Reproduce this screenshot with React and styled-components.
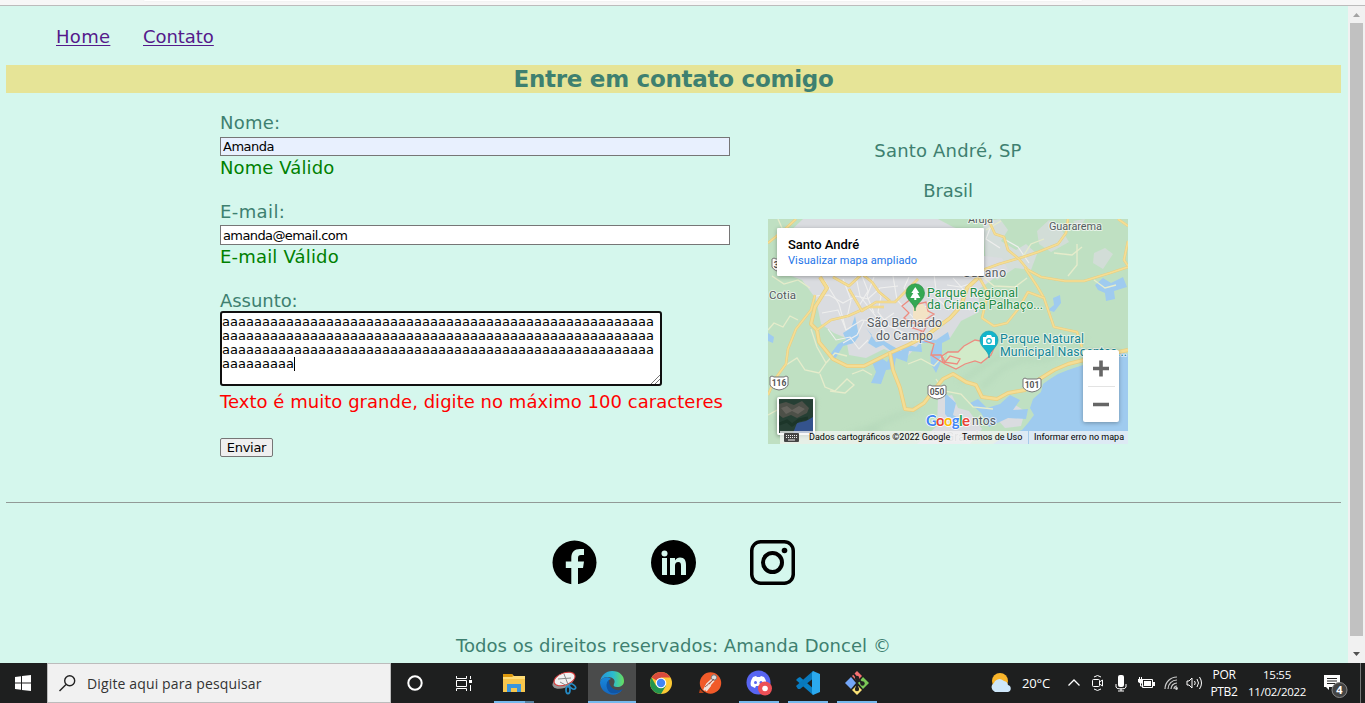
import React from "react";
import styled, { createGlobalStyle } from "styled-components";

const GlobalStyle = createGlobalStyle`
  * { box-sizing: border-box; }
  html, body { margin: 0; padding: 0; overflow: hidden; }
  body { font-family: "DejaVu Sans", Verdana, sans-serif; }
  svg { display: block; flex: none; }
  p, h1 { margin: 0; }
`;

const Screen = styled.div`
  width: 1365px;
  height: 703px;
  display: flex;
  flex-direction: column;
  overflow: hidden;
`;

const BrowserEdge = styled.div`
  height: 6px;
  flex: none;
  background: #f7f7f7;
  border-bottom: 1px solid #bcbcbc;
  padding-left: 144px;
`;

const AddressBar = styled.div`
  width: 938px;
  height: 1px;
  background: #fff;
  border-radius: 0 0 4px 4px;
  box-shadow: 0 0 2px #e8e8e8;
`;

const Viewport = styled.div`
  height: 657px;
  flex: none;
  display: flex;
`;

const Page = styled.main`
  width: 1348px;
  padding: 0 7px 0 6px;
  background: #d5f7ed;
  color: #3e8070;
  font-size: 18px;
  line-height: 22px;
`;

const Nav = styled.nav`
  height: 59px;
  padding: 20px 0 0 50px;
  display: flex;
  gap: 33px;
`;

const NavLink = styled.a`
  width: ${(p) => p.$w}px;
  color: #551a8b;
  text-decoration: underline;
  text-decoration-thickness: 1px;
  text-underline-offset: 2px;
  letter-spacing: ${(p) => p.$ls}px;
  white-space: nowrap;
`;

const Title = styled.h1`
  height: 28px;
  background: #e6e497;
  font-size: 23px;
  line-height: 29px;
  font-weight: 700;
  text-align: center;
  letter-spacing: -0.27px;
`;

const Columns = styled.div`
  display: flex;
  height: 409px;
  padding-left: 214px;
  gap: 38px;
`;

const Form = styled.form`
  width: 510px;
  padding-top: 19px;
  display: flex;
  flex-direction: column;
`;

const Label = styled.label`
  height: ${(p) => p.$h}px;
  letter-spacing: ${(p) => p.$ls || 0}px;
`;

const Input = styled.input`
  height: ${(p) => p.$h}px;
  width: 510px;
  border: 1px solid #767676;
  border-radius: 0;
  padding: 0 2px;
  outline: none;
  background: ${(p) => (p.$filled ? "#e8f0fe" : "#fff")};
  color: #000;
  font: 13px "DejaVu Sans", Verdana, sans-serif;
  letter-spacing: ${(p) => p.$ls || 0}px;
`;

const Message = styled.p`
  height: 22px;
  line-height: ${(p) => p.$lh || 22}px;
  margin-bottom: ${(p) => p.$mb}px;
  color: ${(p) => (p.$error ? "#ff0000" : "#008000")};
  letter-spacing: ${(p) => p.$ls || 0}px;
  white-space: nowrap;
`;

const TextBox = styled.div`
  position: relative;
  width: 442px;
  height: 75px;
  margin-bottom: 5px;
  padding: 2px 0 0 0;
  border: 2px solid #101010;
  border-radius: 3px;
  background: #fff;
  color: #000;
  font-size: 13px;
  line-height: 14px;
  letter-spacing: 0.033px;
`;

const TextLine = styled.div`
  height: 14px;
  display: flex;
  white-space: nowrap;
`;

const Caret = styled.span`
  width: 1px;
  height: 14px;
  background: #000;
`;

const Grip = styled.svg`
  position: absolute;
  right: 0;
  bottom: 0;
`;

const Submit = styled.button`
  width: 53px;
  height: 19px;
  padding: 0;
  border: 1px solid #767676;
  border-radius: 2px;
  background: #efefef;
  color: #000;
  font: 13px/16px "DejaVu Sans", Verdana, sans-serif;
  letter-spacing: -0.3px;
`;

const Place = styled.section`
  width: 360px;
  padding-top: 47px;
  text-align: center;
`;

const PlaceLine = styled.p`
  height: ${(p) => p.$h}px;
  letter-spacing: ${(p) => p.$ls}px;
`;

const MapFrame = styled.div`
  position: relative;
  width: 360px;
  height: 225px;
  overflow: hidden;
  font-family: Roboto, sans-serif;
  text-align: left;
`;

const MapCard = styled.div`
  position: absolute;
  left: 9px;
  top: 9px;
  width: 207px;
  height: 48px;
  padding: 8px 11px;
  background: #fff;
  border-radius: 1px;
  box-shadow: 0 1px 4px rgba(0, 0, 0, 0.3);
`;

const CardTitle = styled.div`
  color: #000;
  font-size: 13px;
  line-height: 17px;
  font-weight: 500;
  letter-spacing: -0.03px;
`;

const CardLink = styled.a`
  display: block;
  color: #1a73e8;
  font-size: 11px;
  line-height: 15px;
  letter-spacing: 0.1px;
`;

const ZoomBox = styled.div`
  position: absolute;
  left: 315px;
  top: 131px;
  width: 36px;
  height: 72px;
  background: #fff;
  border-radius: 2px;
  box-shadow: 0 1px 4px rgba(0, 0, 0, 0.3);
`;

const Satellite = styled.div`
  position: absolute;
  left: 9px;
  top: 178px;
  width: 38px;
  height: 38px;
  border: 2px solid #fff;
  border-radius: 2px;
  box-shadow: 0 1px 4px rgba(0, 0, 0, 0.4);
`;

const Credits = styled.div`
  position: absolute;
  right: 0;
  bottom: 0;
  width: 348px;
  height: 13px;
  display: flex;
  background: rgba(245, 245, 245, 0.72);
  color: #000;
  font-size: 9px;
  line-height: 13px;
`;

const Credit = styled.span`
  width: ${(p) => p.$w}px;
  flex: none;
  padding-left: ${(p) => p.$pl}px;
  padding-top: ${(p) => p.$pt || 0}px;
  letter-spacing: ${(p) => p.$ls || 0}px;
  white-space: nowrap;
  border-left: ${(p) => (p.$line ? "1px solid #a5cbea" : "0")};
`;

const Footer = styled.footer`
  height: 161px;
  border-top: 1px solid #929a97;
  text-align: center;
`;

const Social = styled.div`
  height: 132px;
  padding: 37px 0 0 546px;
  display: flex;
  gap: 54px;
`;

const Rights = styled.p`
  letter-spacing: ${(p) => p.$ls}px;
`;

const Scrollbar = styled.aside`
  width: 17px;
  background: #f1f1f1;
  display: flex;
  flex-direction: column;
  align-items: center;
`;

const Thumb = styled.div`
  width: 13px;
  height: 613px;
  background: #c1c1c1;
`;

const Taskbar = styled.div`
  height: 40px;
  flex: none;
  display: flex;
  background: #1e1f1f;
  color: #fff;
  font-family: "Open Sans", "Noto Sans", sans-serif;
`;

const Start = styled.div`
  width: 47px;
  padding-right: 1px;
  display: flex;
  align-items: center;
  justify-content: center;
`;

const Search = styled.div`
  width: 344px;
  border: 1px solid #bcbcbc;
  background: #f1f1f1;
  color: #333;
  display: flex;
  align-items: center;
  gap: 10px;
  padding-left: 10px;
  font-size: 14px;
  font-weight: 400;
  letter-spacing: 0.14px;
`;

const Apps = styled.div`
  display: flex;
  width: 590px;
`;

const AppSlot = styled.div`
  width: ${(p) => p.$w || 49}px;
  padding-right: ${(p) => (p.$w ? 0 : 1)}px;
  display: flex;
  flex-direction: column;
  align-items: center;
`;

const AppFace = styled.div`
  width: 48px;
  height: 38px;
  display: flex;
  align-items: center;
  justify-content: center;
  padding-top: 2px;
  background: ${(p) => (p.$active ? "#4a4b4b" : "transparent")};
`;

const Underline = styled.div`
  height: 2px;
  width: ${(p) => p.$u || 0}px;
  background: ${(p) => (p.$stack ? "linear-gradient(90deg, #76b9ed 31px, #55809f 31px)" : "#76b9ed")};
`;

const Tray = styled.div`
  flex: 1;
  display: flex;
  align-items: center;
  padding-left: 9px;
`;

const TrayItem = styled.div`
  width: ${(p) => p.$w}px;
  flex: none;
  height: 40px;
  display: flex;
  flex-direction: column;
  align-items: center;
  justify-content: center;
  font-size: ${(p) => p.$fs || 12}px;
  line-height: 17px;
  letter-spacing: ${(p) => p.$ls || 0}px;
  white-space: nowrap;
`;

const DesktopPeek = styled.div`
  width: 5px;
  height: 40px;
  margin-left: auto;
  border-left: 1px solid #777;
`;

const MAJOR = [
  "M52 58L59 69L47 88L43 105L49 111L51 123L65 140L79 147L96 147L122 134L140 126L158 117L182 99L193 87L199 69L211 58",
  "M122 134L125 151L132 169L137 190L145 191L156 184L166 171L175 160L185 155L198 163L208 166L214 178L229 180L240 174L257 171L270 161L286 151L300 145L328 138L360 131",
  "M47 76L43 91L28 110L20 130L18 145L7 160L0 176",
  "M49 111L63 101L80 97L100 88L116 88",
  "M65 58L81 67L94 55L104 63L111 73L122 82",
  "M150 60L137 73L127 83L108 83L94 92L81 70",
  "M0 24L15 12L28 0M180 54L204 55L231 45L255 38L270 33L290 25L298 14L300 0",
  "M220 0L227 15L236 18L240 31L251 40L260 51L273 58L297 62L316 62L342 54L360 48",
  "M257 49L269 67L276 79L286 108L309 113L314 128",
  "M211 58L220 74L214 99L226 107L239 104L251 89L260 73L276 79",
  "M350 0L360 7M360 22L356 41L360 47",
];
const MINOR = [
  "M43 110L49 128L58 144L51 154L37 151L29 139L18 146M58 144L67 134L79 137",
  "M52 155L57 168L67 172L79 160L86 166L77 174L62 172",
  "M10 0L14 9L8 17L18 25L10 36M4 57L16 65L30 61L42 69",
  "M218 11L233 2M254 39L263 25L276 20M300 57L309 46L309 25",
  "M326 61L337 69L348 66M286 34L304 36L314 28",
  "M140 145L153 140L166 147L177 135M168 160L176 172L193 175L205 188L225 190",
  "M0 196L13 189L23 193L31 183M84 155L95 151L104 156",
  "M30 101L22 97L15 108L6 104L0 111",
  "M214 57L226 67L247 68L259 59",
];
const STREETS = [
  "M56 61L71 85L78 111M75 60L83 81L79 99M88 58L92 77L109 99L119 117",
  "M47 77L61 76L75 84L88 77L100 80L112 69L130 67",
  "M54 94L70 91L78 111L94 101L113 103L126 94",
  "M101 59L113 77L110 93L121 107L141 116",
  "M125 57L129 81L143 96L154 109M141 58L136 69L151 87L166 88",
  "M94 57L100 72L91 87M106 58L99 77L106 94M75 124L89 116L96 102",
  "M60 110L68 121L82 118L91 130L100 121M166 55L169 79L181 91",
  "M185 59L195 70L190 82L202 91M179 66L192 68L208 63",
  "M224 4L218 20L232 29M236 20L250 28L261 44",
];
const WATER = [
  "M87 97L83 109L75 114L78 121L70 125L61 137L67 140L75 127L86 124L91 117Z",
  "M98 109L104 116L100 124L108 129L115 126L124 133L119 143L112 138L104 143L108 153L103 164L113 165L118 151L126 150L128 139L139 143L141 132L154 133L153 124L168 124L162 133L163 145L168 154L174 140L174 124L182 120L180 113L168 121L157 119L148 128L138 125L133 132L116 122L108 123Z",
  "M327 66L335 59L343 64L355 58L359 68L346 72L347 80L338 82L337 74L330 71Z",
  "M285 79L292 76L293 84L286 93L280 91L286 86Z",
  "M202 184L210 180L219 189L232 185L242 176L252 181L245 191L260 190L258 200L240 199L221 208L213 194Z",
  "M177 174L188 184L185 196L196 202L187 207L177 195Z",
  "M0 114L6 118L5 124L0 122Z",
];
const BORDER = "M144 79L134 87L141 94L136 99L144 104L151 104L145 109L154 112L149 117L157 122L166 125L163 136L173 136L175 143L189 145L192 140L182 137L177 143L174 137L180 133L190 133L196 127L207 121L218 123L226 129L223 136L213 144L207 142L197 145L188 150L177 145L163 136M144 79L150 85L158 83L160 92L166 95L157 101L158 108L153 117";

function Shield({ x, y, w, label }) {
  return (
    <g>
      <path d={`M${x} ${y + 2}q2-2 4 0h${w - 8}q2-2 4 0v8q-2 4-${w / 2} 5q-${w / 2 - 2}-1-${w / 2}-5z`} fill="#fff" stroke="#777" strokeWidth="1" />
      <text x={x + w / 2} y={y + 11} textAnchor="middle" fontSize="8.5" fontWeight="700" fill="#555">{label}</text>
    </g>
  );
}

function MapArt() {
  return (
    <svg width="360" height="225" viewBox="0 0 360 225" fontFamily="Roboto, sans-serif">
      <defs>
        <filter id="soft"><feGaussianBlur stdDeviation="0.5" /></filter>
        <filter id="relief"><feGaussianBlur stdDeviation="3" /></filter>
      </defs>
      <rect width="360" height="225" fill="#bfe0c2" />
      <g filter="url(#relief)" fill="none" stroke="#aacfb2" strokeWidth="3" opacity=".6">
        <path d="M213 169L235 149L253 141L278 140L299 131L318 122M97 211L127 198L150 190M192 163L214 148L236 134L258 133M77 218L92 211L115 213M4 205L27 180L48 184" />
      </g>
      <g filter="url(#soft)">
        <g fill="#dadce0">
          <path d="M15 19L35 0L170 0L185 8L212 17L216 37L234 39L240 51L225 60L211 70L211 93L193 102L182 119L151 125L138 139L116 130L98 139L81 136L78 119L66 114L53 105L48 80L34 61L18 55Z" />
          <path d="M215 3L232 0L240 11L233 22L248 31L258 25L269 35L263 51L247 49L229 61L218 47Z" opacity=".8" />
          <path d="M269 12L281 1L293 10L301 23L283 33L271 25ZM326 34L337 29L345 35L335 50L325 44ZM305 2L317 0L311 11Z" opacity=".7" />
          <path d="M170 179L184 176L190 189L201 192L214 210L202 225L149 225L169 207ZM222 192L241 182L257 192L253 207L237 209Z" />
        </g>
        <path d="M360 135L345 132L329 139L315 146L300 151L290 155L282 160L275 165L273 173L265 180L262 189L266 196L260 204L254 211L239 216L225 225H360Z" fill="#9fcbef" />
        {WATER.map((d) => <path key={d} d={d} fill="#9fcbef" />)}
        {STREETS.map((d) => <path key={d} d={d} fill="none" stroke="#efefee" strokeWidth="1.1" />)}
        {MINOR.map((d) => <path key={d} d={d} fill="none" stroke="#e6eccb" strokeWidth="1.3" />)}
        {MAJOR.map((d, i) => (
          <g key={d} fill="none" strokeLinejoin="round">
            <path d={d} stroke="#e8ce80" strokeWidth={i < 2 ? 4 : 2.6} />
            <path d={d} stroke="#f5dd94" strokeWidth={i < 2 ? 2.4 : 1.6} />
          </g>
        ))}
        <path d="M177 143L180 133L190 133L196 127L207 121L218 123L226 129L223 136L213 144L207 142L197 145L188 150Z" fill="#d5edca" opacity=".85" />
        <path d="M145 83L155 85L162 94L155 104L145 99Z" fill="#f3e3c5" />
        <path d={BORDER} fill="none" stroke="#ed8c80" strokeWidth="1.3" />
      </g>
      <Shield x={2} y={156} w={18} label="116" />
      <Shield x={160} y={165} w={18} label="050" />
      <Shield x={255} y={158} w={18} label="101" />
      <Shield x={4} y={38} w={18} label="374" />
      <path d="M147 92C147 84 138 82 138 74A9 9 0 0 1 156.500 74C156.500 82 147 84 147 92Z" fill="#34a853" stroke="#248c42" strokeWidth=".6" />
      <path d="M147.300 68l4 6h-2l3 5h-4v2h-2v-2h-4l3-5h-2z" fill="#fff" />
      <path d="M221 139C221 131 212 129 212 121A9 9 0 0 1 230 121C230 129 221 131 221 139Z" fill="#12b5cb" stroke="#1397aa" strokeWidth=".6" />
      <path d="M215 118h3l1-2h4l1 2h3v8h-12z" fill="#fff" />
      <circle cx="221" cy="122" r="2.300" fill="none" stroke="#12b5cb" strokeWidth="1.200" />
      <g fontSize="12.300" fontWeight="400" stroke="#fff" strokeWidth="2" strokeOpacity=".6" paintOrder="stroke" strokeLinejoin="round">
        <g fill="#555b5f">
          <text x="200" y="4" fontSize="11" textLength="25">Arujá</text>
          <text x="281" y="11" fontSize="11" textLength="53">Guararema</text>
          <text x="195" y="58" fontSize="12" textLength="43">Suzano</text>
          <text x="1" y="80" fontSize="11.500" textLength="27">Cotia</text>
          <text x="99" y="108" textLength="75">São Bernardo</text>
          <text x="108" y="121" textLength="57">do Campo</text>
          <text x="204" y="206" fontSize="12" textLength="24">ntos</text>
          <text x="147" y="222" fontSize="12" textLength="70" opacity=".3">Praia Grande</text>
        </g>
        <g fill="#248c48">
          <text x="159" y="77.500" textLength="91">Parque Regional</text>
          <text x="159" y="90" textLength="116">da Criança Palhaço...</text>
        </g>
        <g fill="#138596">
          <text x="232" y="124" textLength="84">Parque Natural</text>
          <text x="232" y="137" textLength="127">Municipal Nascentes...</text>
        </g>
      </g>
      <text x="158" y="207" fontSize="15" fontFamily="Lato, sans-serif" fontWeight="700" textLength="44" stroke="#fff" strokeWidth="1.500" paintOrder="stroke">
        <tspan fill="#4285f4">G</tspan><tspan fill="#ea4335">o</tspan><tspan fill="#fbbc05">o</tspan><tspan fill="#4285f4">g</tspan><tspan fill="#34a853">l</tspan><tspan fill="#ea4335">e</tspan>
      </text>
    </svg>
  );
}

function GoogleMap() {
  return (
    <MapFrame>
      <MapArt />
      <MapCard>
        <CardTitle>Santo André</CardTitle>
        <CardLink>Visualizar mapa ampliado</CardLink>
      </MapCard>
      <ZoomBox>
        <svg width="36" height="72">
          <path d="M10 18.500h16M18 10.500v16M10 54.500h16" stroke="#666" strokeWidth="3.600" />
          <path d="M5 36.500h27" stroke="#e3e3e3" />
        </svg>
      </ZoomBox>
      <Satellite>
        <svg width="34" height="34">
          <rect width="34" height="34" fill="#263f34" />
          <path d="M0 5L7 3L15 6L23 2L30 9L28 14L18 19L12 16L4 19L0 16Z" fill="#4d5048" />
          <path d="M2 9l6-2 5 4 7-4 6 3-7 5-6-3-6 3z" fill="#77706a" opacity=".6" />
          <path d="M14 34L18 24L27 22L34 18V34Z" fill="#34538d" />
          <path d="M0 25l8-3 5 4 7-5 9-2" fill="none" stroke="#1c3529" strokeWidth="3" />
        </svg>
      </Satellite>
      <Credits>
        <Credit $w={24} $pl={4} $pt={2}>
          <svg width="16" height="10" viewBox="0 0 16 10">
            <rect y="0" width="15" height="9" rx="1" fill="#444" />
            <path d="M2 2.500h11M2 4.500h11" stroke="#eee" strokeDasharray="1 1" />
            <path d="M4 7h7" stroke="#eee" />
          </svg>
        </Credit>
        <Credit $w={153} $pl={5}>Dados cartográficos ©2022 Google</Credit>
        <Credit $w={71} $pl={5}>Termos de Uso</Credit>
        <Credit $w={100} $pl={5} $line>Informar erro no mapa</Credit>
      </Credits>
    </MapFrame>
  );
}

function Facebook() {
  return (
    <svg width="45" height="45" viewBox="0 0 45 45">
      <circle cx="22.500" cy="22.500" r="22" />
      <path d="M19.300 45V28H13.800V21.500H19.300V18C19.300 12 22.500 9 28 9H32V15H29C26.800 15 26 16 26 18V21.500H32L31 28H26V45Z" fill="#d5f7ed" />
    </svg>
  );
}

function LinkedIn() {
  return (
    <svg width="45" height="45" viewBox="0 0 45 45">
      <circle cx="22.500" cy="22.500" r="22.500" />
      <g fill="#d5f7ed">
        <circle cx="13.500" cy="13.500" r="3" />
        <path d="M11 18h5v17h-5zM19 18h5v2.400c1-1.700 3-2.800 5-2.800 4.600 0 6 3 6 7.400v10h-5v-9c0-2.400-.5-4-2.700-4-2.300 0-3.300 1.600-3.300 4v9h-5z" />
      </g>
    </svg>
  );
}

function Instagram() {
  return (
    <svg width="45" height="45" viewBox="0 0 45 45">
      <rect x="1.750" y="1.750" width="41.500" height="41.500" rx="9" fill="none" stroke="#000" strokeWidth="3.500" />
      <circle cx="22.500" cy="22.500" r="9.500" fill="none" stroke="#000" strokeWidth="4" />
      <circle cx="34.500" cy="10.500" r="2.800" />
    </svg>
  );
}

const icons = {
  cortana: <svg width="18" height="18"><circle cx="9" cy="9" r="6.700" fill="none" stroke="#fff" strokeWidth="2" /></svg>,
  tasks: (
    <svg width="18" height="18" viewBox="0 0 18 18" fill="none" stroke="#fff">
      <path d="M1.500 2v2.500h10V2M1.500 17v-2.500h10V17M1.500 6.500h10v6h-10zM15.500 2v3M15.500 11v6" /><path d="M14 6h3v3h-3z" fill="#fff" stroke="none" />
    </svg>
  ),
  explorer: (
    <svg width="24" height="20" viewBox="0 0 24 20">
      <path d="M1 1h9l2 2h11v16H1z" fill="#f7c64d" /><path d="M1 4h9l2-1h11v3H1z" fill="#ffdc76" />
      <path d="M1 1h9l1 2-1 1H1z" fill="#dd980c" /><path d="M5 11h14v8h-4v-4H9v4H5z" fill="#3a96dd" />
    </svg>
  ),
  snip: (
    <svg width="25" height="24" viewBox="0 0 25 24">
      <ellipse cx="11" cy="11" rx="11" ry="6" transform="rotate(-20 11 11)" fill="#939393" />
      <ellipse cx="12.500" cy="8" rx="11" ry="6" transform="rotate(-20 12.500 8)" fill="#f1f1f1" stroke="#d53939" />
      <path d="M12 3L17 16M6 8L19 7M8 11L17 16" stroke="#888" />
      <g fill="none" stroke="#258bc5" strokeWidth="1.700"><ellipse cx="16" cy="19" rx="2" ry="3.600" /><ellipse cx="20.500" cy="15.500" rx="2" ry="3.500" transform="rotate(-55 20.500 15.500)" /></g>
    </svg>
  ),
  edge: (
    <svg width="24" height="24" viewBox="0 0 24 24">
      <defs>
        <linearGradient id="eg"><stop stopColor="#2493db" /><stop offset=".55" stopColor="#2cbccf" /><stop offset="1" stopColor="#68de5c" /></linearGradient>
        <linearGradient id="eb" x2="0" y2="1"><stop stopColor="#1788dc" /><stop offset="1" stopColor="#1666bd" /></linearGradient>
      </defs>
      <path d="M0 11C1 4 6 0 12 0c8 0 12 5 12 10 0 4-3 6-7 6-3 0-4-1-3-3 2-4-1-7-6-7-4 0-7 2-8 5z" fill="url(#eg)" />
      <path d="M0 11c2-5 8-6 11-3-4 1-5 6-3 10 2 5 8 5 14 1-3 4-8 6-13 4C3 21 0 16 0 11z" fill="url(#eb)" />
      <path d="M9 9c-4 3-3 10 2 13 5 1 9 0 12-4-6 3-11 0-13-4-1-2-1-3-1-5z" fill="#0f55a4" />
    </svg>
  ),
  chrome: (
    <svg width="24" height="24" viewBox="0 0 24 24">
      <circle cx="12" cy="12" r="11" fill="#fcc934" />
      <path d="M12 12L2.500 6.500A11 11 0 0 1 21.500 6.500H12Z" fill="#d94b3d" /><path d="M2.500 6.500A11 11 0 0 0 12 23L17 14.500L12 12L7 14.500Z" fill="#24954d" />
      <circle cx="12" cy="12" r="5.300" fill="#fff" /><circle cx="12" cy="12" r="4.200" fill="#4285f4" />
    </svg>
  ),
  postman: (
    <svg width="24" height="24" viewBox="0 0 24 24">
      <circle cx="12.500" cy="12" r="10.700" fill="#f15a29" /><path d="M2 18l4 4H1z" fill="#b34118" />
      <path d="M14.500 8L9 13L6 19L12 14L16 9.500M9 13L12 15L8 20" fill="none" stroke="#f2e3dc" strokeWidth="1.700" /><circle cx="16" cy="6.500" r="2.700" fill="#ddd" stroke="#777" />
      <path d="M7 16l9-8" stroke="#633" strokeWidth=".7" />
    </svg>
  ),
  discord: (
    <svg width="26" height="26" viewBox="0 0 26 26">
      <circle cx="12.500" cy="12.500" r="12" fill="#5865f2" />
      <path d="M7 7l3-1 1 1h3l1-1 3 1c2 3 3 6 2 9l-4 2-1-2H10l-1 2-4-2c-1-3 0-6 2-9z" fill="#fff" />
      <circle cx="9.500" cy="12.500" r="1.500" fill="#5865f2" /><circle cx="15" cy="12.500" r="1.500" fill="#5865f2" />
      <circle cx="19" cy="18.500" r="7" fill="#ed5057" /><circle cx="19" cy="18.500" r="2.800" fill="#fff" />
    </svg>
  ),
  code: (
    <svg width="24" height="24" viewBox="0 0 24 24">
      <path d="M2 7L4 6L19 19L17 24L0 9Z" fill="#087fc4" /><path d="M17 0L0 15L2 18L4 18L19 6Z" fill="#0879bd" /><path d="M17 0l7 3v18l-7 3-1-2V2z" fill="#2ba9ee" />
    </svg>
  ),
  git: (
    <svg width="26" height="26" viewBox="0 0 26 26">
      <path d="M13 1l5 5-5 5-5-5z" fill="#f57171" /><path d="M7 7l5 6-5 6-6-6z" fill="#73a6f8" /><path d="M19 7l6 6-6 6-5-6z" fill="#7bc957" /><path d="M13 15l5 5-5 5-5-5z" fill="#fbe276" />
      <path d="M9 3l4 5v12M13 8l6 6" fill="none" stroke="#222" strokeWidth="2" />
      <g fill="#222"><circle cx="13" cy="8" r="2.200" /><circle cx="13" cy="19" r="2.200" /><circle cx="18.500" cy="13.500" r="2.200" /></g>
    </svg>
  ),
};

const apps = [
  { icon: "cortana", w: 48 }, { icon: "tasks", w: 49 },
  { icon: "explorer", w: 52, u: 40, stack: true },
  { icon: "snip", w: 48 }, { icon: "edge", u: 48, active: true },
  { icon: "chrome" }, { icon: "postman" }, { icon: "discord", u: 40 }, { icon: "code", u: 40 }, { icon: "git", u: 40 },
];

function WindowsTaskbar() {
  return (
    <Taskbar>
      <Start><svg width="16" height="16" viewBox="0 0 16 16" fill="#fff"><path d="M0 2l6-.8V7.500H0zM7 1l9-1v7.500H7zM0 8.500h6v6.300L0 14zM7 8.500h9V16l-9-1z" /></svg></Start>
      <Search>
        <svg width="19" height="18" viewBox="0 0 19 18" fill="none" stroke="#222" strokeWidth="1.400"><circle cx="11.700" cy="6.800" r="5" /><path d="M8 10.500L1.500 17" /></svg>
        <span>Digite aqui para pesquisar</span>
      </Search>
      <Apps>
        {apps.map((a) => (
          <AppSlot key={a.icon} $w={a.w}>
            <AppFace $active={a.active}>{icons[a.icon]}</AppFace>
            <Underline $u={a.u} $stack={a.stack} />
          </AppSlot>
        ))}
      </Apps>
      <Tray>
        <TrayItem $w={22}>
          <svg width="22" height="22" viewBox="0 0 22 22"><circle cx="10" cy="9" r="8" fill="#f9b52b" /><path d="M5 20a5 5 0 0 1-1-9 6 6 0 0 1 10-2 5 5 0 0 1 4 4 3.600 3.600 0 0 1 0 7z" fill="#cee7fa" /></svg>
        </TrayItem>
        <TrayItem $w={48} $fs={13} $ls={-0.1}>20°C</TrayItem>
        <TrayItem $w={28}><svg width="14" height="10"><path d="M1.500 7.500L7 2L12.500 7.500" fill="none" stroke="#fff" strokeWidth="1.300" /></svg></TrayItem>
        <TrayItem $w={20}>
          <svg width="14" height="18" viewBox="0 0 14 18" fill="none" stroke="#fff"><rect x="1.500" y="5.500" width="7" height="7" rx="1" /><path d="M8.500 8l3-2v6l-3-2M3 3q3.500-3 7 0M3 15q3.500 3 7 0" /></svg>
        </TrayItem>
        <TrayItem $w={26}><svg width="12" height="18" viewBox="0 0 12 18"><rect x="3" y="1" width="6" height="12" rx="2" fill="#fff" /><path d="M1 10v3q0 2 5 2t5-2v-3M6 14v3M3 17h6" fill="none" stroke="#fff" /></svg></TrayItem>
        <TrayItem $w={24}>
          <svg width="17" height="14" viewBox="0 0 17 14"><path d="M4.500 3.500h10v8h-10z" fill="none" stroke="#fff" /><path d="M6 5h7v5H6zM15 6h2v4h-2zM0 3h5v3L3 8 0 6z" fill="#fff" /><path d="M1.500 1v3M3.500 1v3M2.500 7v3h3" stroke="#fff" fill="none" /></svg>
        </TrayItem>
        <TrayItem $w={26}>
          <svg width="14" height="14" viewBox="0 0 14 14" fill="none" stroke="#ccc" strokeWidth="1.200"><path d="M1 13A12 12 0 0 1 13 1M4 13a9 9 0 0 1 9-9M7 13a6 6 0 0 1 6-6M10 13a3 3 0 0 1 3-3" /><circle cx="12.500" cy="12.500" r=".8" fill="#fff" /></svg>
        </TrayItem>
        <TrayItem $w={20}>
          <svg width="17" height="14" viewBox="0 0 17 14" fill="none" stroke="#fff"><path d="M1 5h2l3-3v10L3 9H1zM8.500 5q1.500 2 0 4M11 3q3 4 0 8M13.500 1q4 6 0 12" /></svg>
        </TrayItem>
        <TrayItem $w={40} $fs={12} $ls={-0.3}><span>POR</span><span>PTB2</span></TrayItem>
        <TrayItem $w={66} $fs={11.5} $ls={-0.3}><span>15:55</span><span>11/02/2022</span></TrayItem>
        <TrayItem $w={50}>
          <svg width="26" height="30" viewBox="-1 -4 26 30">
            <path d="M1 3h16v12H6v3l-3-3H1z" fill="#fff" /><path d="M4 6.500h10M4 9h10M4 11.500h8" stroke="#222" />
            <circle cx="16.500" cy="18" r="7.500" fill="#444" stroke="#888" /><text x="16.500" y="22" textAnchor="middle" fontSize="11" fontWeight="700" fill="#fff">4</text>
          </svg>
        </TrayItem>
        <DesktopPeek />
      </Tray>
    </Taskbar>
  );
}

export default function App() {
  return (
    <Screen>
      <GlobalStyle />
      <BrowserEdge><AddressBar /></BrowserEdge>
      <Viewport>
        <Page>
          <Nav>
            <NavLink $w={54} $ls={0.3}>Home</NavLink>
            <NavLink $w={71} $ls={-0.05}>Contato</NavLink>
          </Nav>
          <Title>Entre em contato comigo</Title>
          <Columns>
            <Form>
              <Label $h={25} $ls={0.25}>Nome:</Label>
              <Input $h={19} $filled $ls={-0.5} defaultValue="Amanda" />
              <Message $mb={23} $lh={24} $ls={0.1}>Nome Válido</Message>
              <Label $h={24} $ls={0.4}>E-mail:</Label>
              <Input $h={20} $ls={-0.6} defaultValue="amanda@email.com" />
              <Message $mb={23} $lh={24} $ls={0.18}>E-mail Válido</Message>
              <Label $h={21} $ls={-0.05}>Assunto:</Label>
              <TextBox>
                {[54, 54, 54].map((n, i) => <TextLine key={i}>{"a".repeat(n)}</TextLine>)}
                <TextLine>{"a".repeat(9)}<Caret /></TextLine>
                <Grip width="9" height="9"><path d="M0 9L9 0M4 9L9 4" stroke="#777" /></Grip>
              </TextBox>
              <Message $mb={25} $error $ls={0.035}>Texto é muito grande, digite no máximo 100 caracteres</Message>
              <Submit type="button">Enviar</Submit>
            </Form>
            <Place>
              <PlaceLine $h={40} $ls={0.18}>Santo André, SP</PlaceLine>
              <PlaceLine $h={39} $ls={-0.1}>Brasil</PlaceLine>
              <GoogleMap />
            </Place>
          </Columns>
          <Footer>
            <Social><Facebook /><LinkedIn /><Instagram /></Social>
            <Rights $ls={0.045}>Todos os direitos reservados: Amanda Doncel ©</Rights>
          </Footer>
        </Page>
        <Scrollbar>
          <svg width="17" height="17"><path d="M5 11L8.500 7L12 11Z" fill="#a3a3a3" /></svg>
          <Thumb />
          <svg width="17" height="27"><path d="M5 16L8.500 20L12 16Z" fill="#505050" /></svg>
        </Scrollbar>
      </Viewport>
      <WindowsTaskbar />
    </Screen>
  );
}
